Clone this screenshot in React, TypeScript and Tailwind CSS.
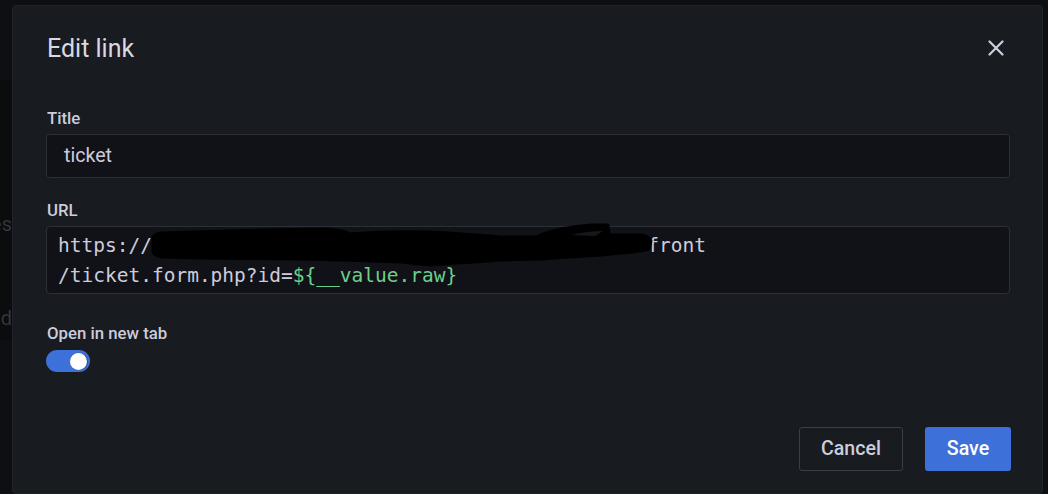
import { X } from 'lucide-react'

function Redaction() {
  // black marker scribble hiding part of the URL
  return (
    <svg
      className="pointer-events-none absolute left-0 top-0 overflow-visible"
      width="1"
      height="1"
    >
      <path
        d="M106 10 Q110 6 114 6 L145 5 Q180 4 214 3 L280 2 Q295 3 303 7 Q340 4 381 5 Q420 7 454 10 L489 10 Q500 5 514 2 Q530 -1 544 -2 L561 -2 L562 8 L594 8 Q602 9 604 14 L602 22 Q590 25 574 26 L554 28 Q520 30 494 32 L454 33 Q430 35 409 36 L384 38 Q370 37 354 35 Q300 33 254 32 L154 31 L114 30 Q106 28 106 24 Z"
        fill="#000"
        stroke="#000"
        strokeWidth="3"
        strokeLinejoin="round"
      />
      <path d="M525 8 Q540 4 556 4 L548 9 Z" fill="#15171c" />
    </svg>
  )
}

export default function App() {
  return (
    <div
      className="flex h-[494px] w-[1048px] overflow-hidden bg-[#0e0f12] text-[#ccccdc]"
      style={{ fontFamily: 'Roboto, "Noto Sans", sans-serif' }}
    >
      {/* page behind the modal */}
      <div className="flex w-[12px] shrink-0 flex-col overflow-hidden pt-[80px]">
        <div className="flex h-[260px] flex-col items-end bg-[#0b0c0e] text-[20px] text-[#34373c] blur-[0.7px]">
          <span className="mt-[134px] leading-none">es</span>
          <span className="mt-[74px] leading-none">nd</span>
        </div>
      </div>

      <div className="mt-[5px] flex w-[1031px] shrink-0 flex-col rounded-[4px] border border-[#202328] bg-[#181b1f] pl-[33px] pr-[32px] pt-[28px]">
        <div className="flex h-[28px] items-center justify-between">
          <h2 className="ml-[1px] text-[25px] font-normal leading-none text-[#d8d9e3]">Edit link</h2>
          <X className="mr-[1px] h-[26px] w-[26px] text-[#ccccdc]" strokeWidth={2.1} />
        </div>

        <label className="ml-[1px] mt-[46px] block text-[16.8px] font-medium leading-[20px]">Title</label>
        <div className="mt-[6px] flex h-[44px] items-center rounded-[4px] border border-[#2c2f36] bg-[#111217] px-[17px] text-[19.6px]">
          ticket
        </div>

        <label className="ml-[1px] mt-[22px] block text-[16.8px] font-medium leading-[20px]">URL</label>
        <div
          className="relative mt-[6px] h-[68px] rounded-[4px] border border-[#2c2f36] bg-[#111217] px-[11px] pt-[4px] text-[19.5px] leading-[30px]"
          style={{ fontFamily: '"DejaVu Sans Mono", "Liberation Mono", monospace' }}
        >
          <div className="whitespace-pre">
            https://<span className="inline-block w-[42.2ch]" />front
          </div>
          <div className="whitespace-pre">
            /ticket.form.php?id=<span className="text-[#6ccf8e]">{'${__value.raw}'}</span>
          </div>
          <Redaction />
        </div>

        <label className="ml-[1px] mt-[29px] block text-[16.8px] font-medium leading-[20px]">Open in new tab</label>
        <div className="mt-[7px] flex h-[22px] w-[44px] items-center justify-end rounded-full bg-[#3d71d9] pr-[3px]">
          <div className="h-[17px] w-[17px] rounded-full bg-white shadow-[1px_0_1px_rgba(0,0,0,0.35)]" />
        </div>

        <div className="mt-[55px] flex justify-end gap-[22px]">
          <button className="h-[44px] w-[104px] rounded-[3px] border border-[#3b3e45] text-[19.6px] font-medium text-[#ccccdc]">
            Cancel
          </button>
          <button className="mr-[-1px] h-[44px] w-[86px] rounded-[3px] bg-[#3d71d9] text-[19.6px] font-medium text-white">
            Save
          </button>
        </div>
      </div>
    </div>
  )
}
